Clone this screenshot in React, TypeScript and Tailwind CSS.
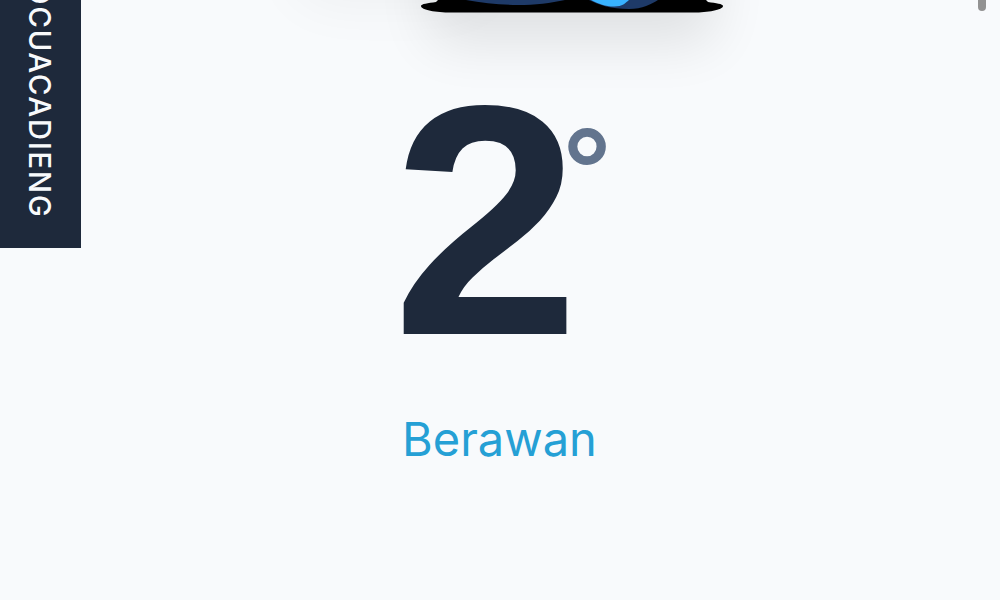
const brand = 'OCUACADIENG';

const weather = {
    temperature: 2,
    condition: 'Berawan',
};

function BrandTab() {
    return (
        <aside className="flex h-[248px] w-[81px] shrink-0 items-end justify-center overflow-hidden bg-[#1e293b] pr-[2px] pb-[30px]">
            <span className="font-['Inter',sans-serif] text-[29.5px] leading-[40px] font-medium tracking-[1.6px] whitespace-nowrap text-slate-50 [writing-mode:vertical-rl]">
                {brand}
            </span>
        </aside>
    );
}

function WeatherArt() {
    return (
        <svg className="ml-[421px] block h-[104px] w-[302px] overflow-visible" viewBox="0 0 302 104" aria-hidden="true">
            <defs>
                <filter id="soft" x="-60%" y="-100%" width="220%" height="300%">
                    <feGaussianBlur stdDeviation="27" />
                </filter>
            </defs>
            <rect x="-130" y="-80" width="200" height="86" rx="40" fill="#000" opacity="0.04" filter="url(#soft)" />
            <rect x="8" y="-80" width="286" height="124" rx="20" fill="#000" opacity="0.095" filter="url(#soft)" />
            <path d="M17 0H285L287 2C295 3 302 4 302 6C302 10 286 12.5 273 12.5H30C15 12.5 0 10 0 6C0 4 7 3 15 2Z" fill="#000" />
            <path d="M45 0C62 3 80 5 97 5S130 3 144 0Z" fill="#1e3a68" />
            <path d="M168 0C178 5 190 9 208 9C221 9 231 4 237 0Z" fill="#1e3a68" />
            <path d="M170 0C178 4 184 6.5 193 6.5S204 3 208 0Z" fill="#38b2ff" />
        </svg>
    );
}

export default function App() {
    return (
        <div className="relative flex h-screen w-screen overflow-hidden bg-[#f8fafc]">
            <BrandTab />
            <main className="-ml-[81px] flex flex-1 flex-col">
                <WeatherArt />
                <div className="flex items-start">
                    <span className="mt-[3px] ml-[392px] h-[228px] w-[171px] origin-left scale-x-[1.03] font-['Liberation_Sans',sans-serif] text-[328px] leading-[227px] font-bold text-[#1e293b]">
                        {weather.temperature}
                    </span>
                    <span className="mt-[26px] h-[50px] font-['Liberation_Sans',sans-serif] text-[120px] leading-[80px] font-bold text-slate-500">
                        °
                    </span>
                </div>
                <p className="mt-[74px] ml-[402px] font-['Inter',sans-serif] text-[47px] leading-[60px] font-normal text-[#25a0d5]">
                    {weather.condition}
                </p>
            </main>
            {/* scrollbar thumb */}
            <div className="absolute -top-5 right-[14px] h-[31px] w-[8px] rounded-full bg-[#929292]" />
        </div>
    );
}
